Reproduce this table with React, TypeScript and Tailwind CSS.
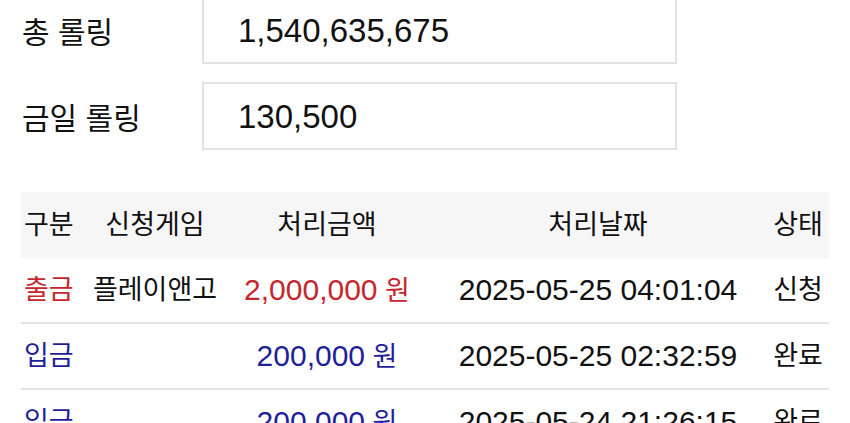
import React from 'react';

// Rolling summary + deposit/withdrawal history, as seen on the mobile page
const summary = [
    { label: '총 롤링', value: '1,540,635,675' },
    { label: '금일 롤링', value: '130,500' },
];

type Row = {
    kind: '출금' | '입금';
    game: string;
    amount: string;
    date: string;
    status: string;
};

const rows: Row[] = [
    { kind: '출금', game: '플레이앤고', amount: '2,000,000', date: '2025-05-25 04:01:04', status: '신청' },
    { kind: '입금', game: '', amount: '200,000', date: '2025-05-25 02:32:59', status: '완료' },
    { kind: '입금', game: '', amount: '200,000', date: '2025-05-24 21:26:15', status: '완료' },
];

const grid = 'grid grid-cols-[64px_140px_204px_338px_62px] items-center';
const ko = 'text-[27px]';

const App: React.FC = () => {
    return (
        <div className="w-[850px] h-[423px] overflow-hidden bg-white text-[#111] font-['Liberation_Sans','Noto_Sans_CJK_KR',sans-serif]">
            {/* Summary boxes - page is scrolled a little, first box top is cut */}
            <div className="flex flex-col gap-[18px] -mt-[4px] pl-[22px]">
                {summary.map((s) => (
                    <div key={s.label} className="flex items-center">
                        <div className="w-[180px] pt-[6px] text-[30px] leading-none">{s.label}</div>
                        <div className="w-[475px] h-[68px] border-2 border-[#e2e2e2] flex items-center pl-[34px] text-[33px] leading-none">
                            {s.value}
                        </div>
                    </div>
                ))}
            </div>

            {/* History table */}
            <div className="mt-[42px] ml-[21px] w-[808px]">
                <div className={`${grid} h-[66px] bg-[#f6f6f6] ${ko} leading-none`}>
                    <div className="pl-[3px]">구분</div>
                    <div className="text-center">신청게임</div>
                    <div className="text-center">처리금액</div>
                    <div className="text-center">처리날짜</div>
                    <div className="text-center">상태</div>
                </div>
                {rows.map((r, i) => {
                    const color = r.kind === '출금' ? 'text-[#c4272d]' : 'text-[#1f1f9a]';
                    return (
                        <div key={i} className={`${grid} h-[66px] border-b-2 border-[#e4e4e4] leading-none`}>
                            <div className={`pl-[3px] ${ko} ${color}`}>{r.kind}</div>
                            <div className={`text-center ${ko}`}>{r.game}</div>
                            <div className={`text-center ${color}`}>
                                <span className="text-[30px]">{r.amount}</span>
                                <span className={ko}> 원</span>
                            </div>
                            <div className="text-center text-[30px]">{r.date}</div>
                            <div className={`text-center ${ko}`}>{r.status}</div>
                        </div>
                    );
                })}
            </div>
        </div>
    );
};

export default App;
